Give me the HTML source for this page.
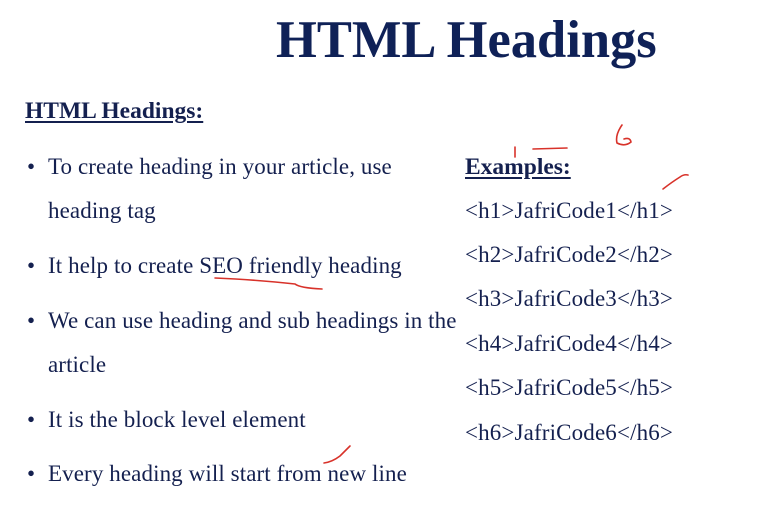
<!DOCTYPE html>
<html><head><meta charset="utf-8"><style>
body{margin:0;width:776px;height:513px;background:#fff;overflow:hidden;position:relative;font-family:"Liberation Serif",serif;color:#14204f}
.t{position:absolute;white-space:nowrap;line-height:1.107;font-size:23px}
.b{font-weight:bold}
.u{text-decoration:underline;text-decoration-thickness:2px;text-underline-offset:3px}
</style></head><body>
<div class="t b" style="left:276px;top:11px;font-size:52.5px;color:#0f2157">HTML Headings</div>
<div class="t b u" style="left:25px;top:98px;font-size:23.5px">HTML Headings:</div>
<div class="t" style="left:27px;top:154px">•</div><div class="t" style="left:48px;top:154px;letter-spacing:0.1px">To create heading in your article, use</div>
<div class="t" style="left:48px;top:198px;letter-spacing:0.1px">heading tag</div>
<div class="t" style="left:27px;top:253px">•</div><div class="t" style="left:48px;top:253px;letter-spacing:0.1px">It help to create SEO friendly heading</div>
<div class="t" style="left:27px;top:308px">•</div><div class="t" style="left:48px;top:308px;letter-spacing:0.1px">We can use heading and sub headings in the</div>
<div class="t" style="left:48px;top:352px;letter-spacing:0.1px">article</div>
<div class="t" style="left:27px;top:407px">•</div><div class="t" style="left:48px;top:407px;letter-spacing:0.1px">It is the block level element</div>
<div class="t" style="left:27px;top:461px">•</div><div class="t" style="left:48px;top:461px;letter-spacing:0.1px">Every heading will start from new line</div>
<div class="t b u" style="left:465px;top:154px;font-size:23.5px">Examples:</div>
<div class="t" style="left:465px;top:198px;letter-spacing:0.15px">&lt;h1&gt;JafriCode1&lt;/h1&gt;</div>
<div class="t" style="left:465px;top:242px;letter-spacing:0.15px">&lt;h2&gt;JafriCode2&lt;/h2&gt;</div>
<div class="t" style="left:465px;top:286px;letter-spacing:0.15px">&lt;h3&gt;JafriCode3&lt;/h3&gt;</div>
<div class="t" style="left:465px;top:331px;letter-spacing:0.15px">&lt;h4&gt;JafriCode4&lt;/h4&gt;</div>
<div class="t" style="left:465px;top:375px;letter-spacing:0.15px">&lt;h5&gt;JafriCode5&lt;/h5&gt;</div>
<div class="t" style="left:465px;top:420px;letter-spacing:0.15px">&lt;h6&gt;JafriCode6&lt;/h6&gt;</div>
<svg width="776" height="513" style="position:absolute;left:0;top:0" fill="none" stroke="#d8322a" stroke-width="1.6" stroke-linecap="round">
<path d="M515 147 L515 157"/>
<path d="M533 149 L567 148"/>
<path d="M622 125 Q615 135 617 143 Q625 147 631 142 Q630 137 624 139"/>
<path d="M663 189 Q672 182 680 177 Q684 174 688 175"/>
<path d="M215 278 Q260 280 295 284 Q300 288 322 289"/>
<path d="M324 463 Q332 462 340 456 Q346 450 350 446"/>
</svg>
</body></html>
